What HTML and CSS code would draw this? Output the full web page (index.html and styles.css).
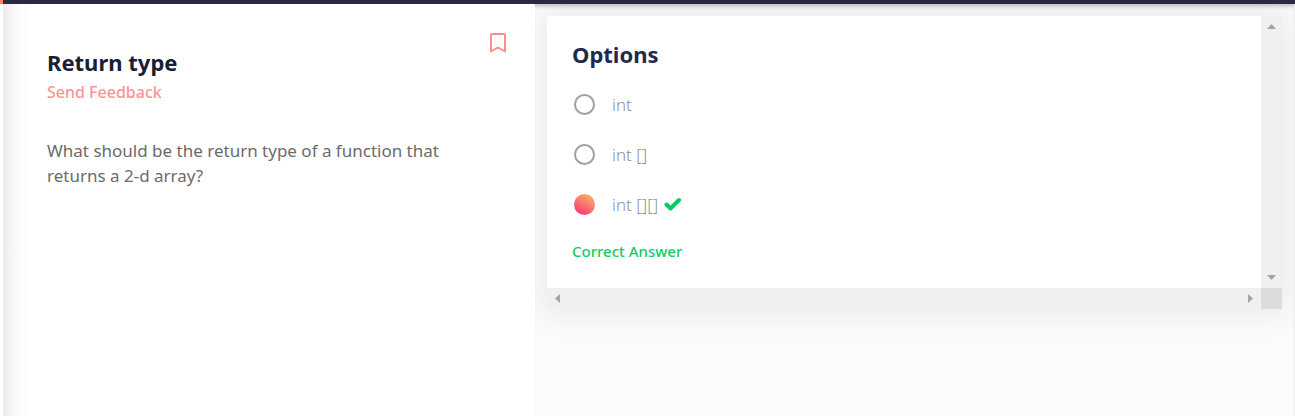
FILE: index.html
```
<!DOCTYPE html>
<html lang="en">
<head>
<meta charset="utf-8">
<meta name="viewport" content="width=device-width, initial-scale=1">
<title>Return type</title>
<link rel="stylesheet" href="styles.css">
</head>
<body>
<header class="topbar"><span class="topbar-progress"></span></header>
<main class="layout">
  <section class="question">
    <div class="question-body">
      <h1 class="title">Return type</h1>
      <a class="feedback" href="#">Send Feedback</a>
      <p class="prompt">What should be the return type of a function that returns a 2-d array?</p>
    </div>
    <button class="bookmark" type="button" aria-label="Bookmark">
      <svg width="18" height="22" viewBox="0 0 18 22" fill="none" stroke="#ff8f8f" stroke-width="2" stroke-linejoin="round"><path d="M2 3q0-1 1-1h12q1 0 1 1v16.500l-7-4-7 4z"/></svg>
    </button>
  </section>
  <section class="answers">
    <div class="card">
      <form class="options">
        <h2 class="heading">Options</h2>
        <div class="option"><input class="radio" type="radio" name="answer" id="a1"><label class="choice" for="a1">int</label></div>
        <div class="option"><input class="radio" type="radio" name="answer" id="a2"><label class="choice" for="a2">int []</label></div>
        <div class="option"><input class="radio" type="radio" name="answer" id="a3" checked><label class="choice" for="a3">int [][]</label>
          <svg class="check" width="18" height="14" viewBox="0 0 18 14" fill="none" stroke="#06cb61" stroke-width="4" stroke-linejoin="round" stroke-linecap="round"><path d="M2.500 7.500l4 4 8.500-8.500"/></svg>
        </div>
        <p class="result">Correct Answer</p>
      </form>
      <div class="bar bar-vertical">
        <button class="arrow" type="button" aria-label="Scroll up"><svg width="9" height="5" viewBox="0 0 9 5" fill="#a3a3a3"><path d="M4.500 0L9 5H0z"/></svg></button>
        <button class="arrow" type="button" aria-label="Scroll down"><svg width="9" height="5" viewBox="0 0 9 5" fill="#a3a3a3"><path d="M0 0h9L4.500 5z"/></svg></button>
      </div>
      <div class="bar">
        <button class="arrow" type="button" aria-label="Scroll left"><svg width="5" height="9" viewBox="0 0 5 9" fill="#a3a3a3"><path d="M5 0v9L0 4.500z"/></svg></button>
        <button class="arrow" type="button" aria-label="Scroll right"><svg width="5" height="9" viewBox="0 0 5 9" fill="#a3a3a3"><path d="M0 0l5 4.500L0 9z"/></svg></button>
      </div>
      <div class="corner"></div>
    </div>
  </section>
</main>
</body>
</html>
```
FILE: styles.css
```
* { box-sizing: border-box; }
body {
  margin: 0;
  min-height: 100vh;
  display: flex;
  flex-direction: column;
  font-family: "Noto Sans", sans-serif;
  background: #fff;
}
h1, h2, p { margin: 0; }
button { border: 0; padding: 0; background: none; display: flex; }
.topbar { height: 4px; background: #2c2647; }
.topbar-progress { display: block; width: 3px; height: 4px; background: #ff7f6b; }
.layout {
  flex: 1;
  display: grid;
  grid-template-columns: 532fr 759fr;
  padding-left: 3px;
  border-right: 1px solid #eee;
}
.question {
  display: flex;
  justify-content: space-between;
  align-items: flex-start;
  padding: 42px 28px 24px 44px;
  background: linear-gradient(90deg, #ebebeb, #f5f5f5 8px, #fcfcfc 18px, #fff 30px);
}
.question-body { max-width: 408px; }
.title { font-size: 22px; line-height: 32px; font-weight: 700; color: #172034; }
.feedback {
  display: block;
  font-size: 16px;
  line-height: 28px;
  font-weight: 500;
  color: #ff9494;
  text-decoration: none;
}
.prompt { margin-top: 32px; font-size: 17px; line-height: 25px; color: #6b6b6b; }
.bookmark { margin-top: -14px; }
.answers {
  padding: 12px;
  background: #fbfbfb;
  box-shadow: inset 0 5px 4px -3px #bbb;
  overflow: hidden;
}
.card {
  display: grid;
  grid-template-columns: 1fr 21px;
  grid-template-rows: auto 21px;
  box-shadow: 0 0 30px 4px rgba(0, 0, 0, .08);
}
.options { padding: 22px 25px 25px; background: #fff; }
.heading { margin-bottom: 9px; font-size: 22px; line-height: 32px; font-weight: 700; color: #1f2a4c; }
.option {
  display: flex;
  align-items: center;
  height: 50px;
  font-size: 17px;
}
.choice { font-weight: 300; color: #333; opacity: .55; }
.radio {
  appearance: none;
  width: 21px;
  height: 21px;
  margin: 0 17px 0 2px;
  border: 2px solid #a0a0a0;
  border-radius: 50%;
}
.radio:checked { border: 0; background: linear-gradient(30deg, #fa3578 10%, #fbc45f); }
.check { margin-left: 6px; }
.result { margin-top: 10px; font-size: 15px; line-height: 24px; font-weight: 500; color: #13cb62; }
.bar { display: flex; justify-content: space-between; background: #f0f0f0; }
.bar-vertical { flex-direction: column; }
.arrow { width: 21px; height: 21px; align-items: center; justify-content: center; }
.corner { background: #dcdcdc; }
```
